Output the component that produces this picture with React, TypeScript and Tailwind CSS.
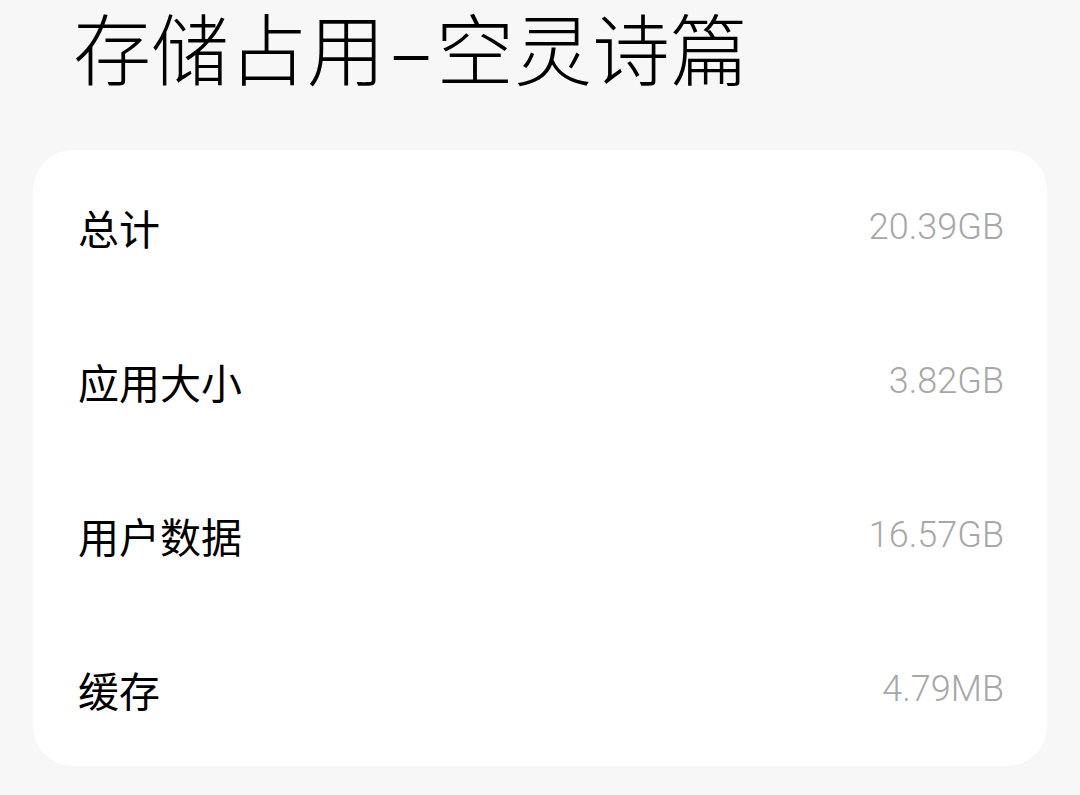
const rows = [
  { label: '总计', value: '20.39GB' },
  { label: '应用大小', value: '3.82GB' },
  { label: '用户数据', value: '16.57GB' },
  { label: '缓存', value: '4.79MB' },
]

export default function App() {
  return (
    <div
      className="min-h-[795px] w-[1080px] bg-[#f7f7f7] overflow-hidden"
      style={{ fontFamily: '"Noto Sans CJK SC", "Noto Sans", sans-serif' }}
    >
      <h1 className="pl-[73px] pt-[1px] text-[78px] leading-[90px] font-light text-black">
        存储占用
        <span className="inline-block w-[51px] text-center">
          <span className="inline-block scale-x-[1.8]">-</span>
        </span>
        空灵诗篇
      </h1>
      <div className="mx-[33px] mt-[59px] bg-white rounded-[40px]">
        {rows.map((r) => (
          <div key={r.label} className="h-[154px] flex items-center justify-between pl-[45px] pr-[43px]">
            <span className="text-[41px] leading-none text-black">{r.label}</span>
            <span
              className="text-[36px] leading-none font-light text-[#a8a8a8]"
              style={{ fontFamily: 'Roboto, "Noto Sans", sans-serif' }}
            >
              {r.value}
            </span>
          </div>
        ))}
      </div>
    </div>
  )
}
